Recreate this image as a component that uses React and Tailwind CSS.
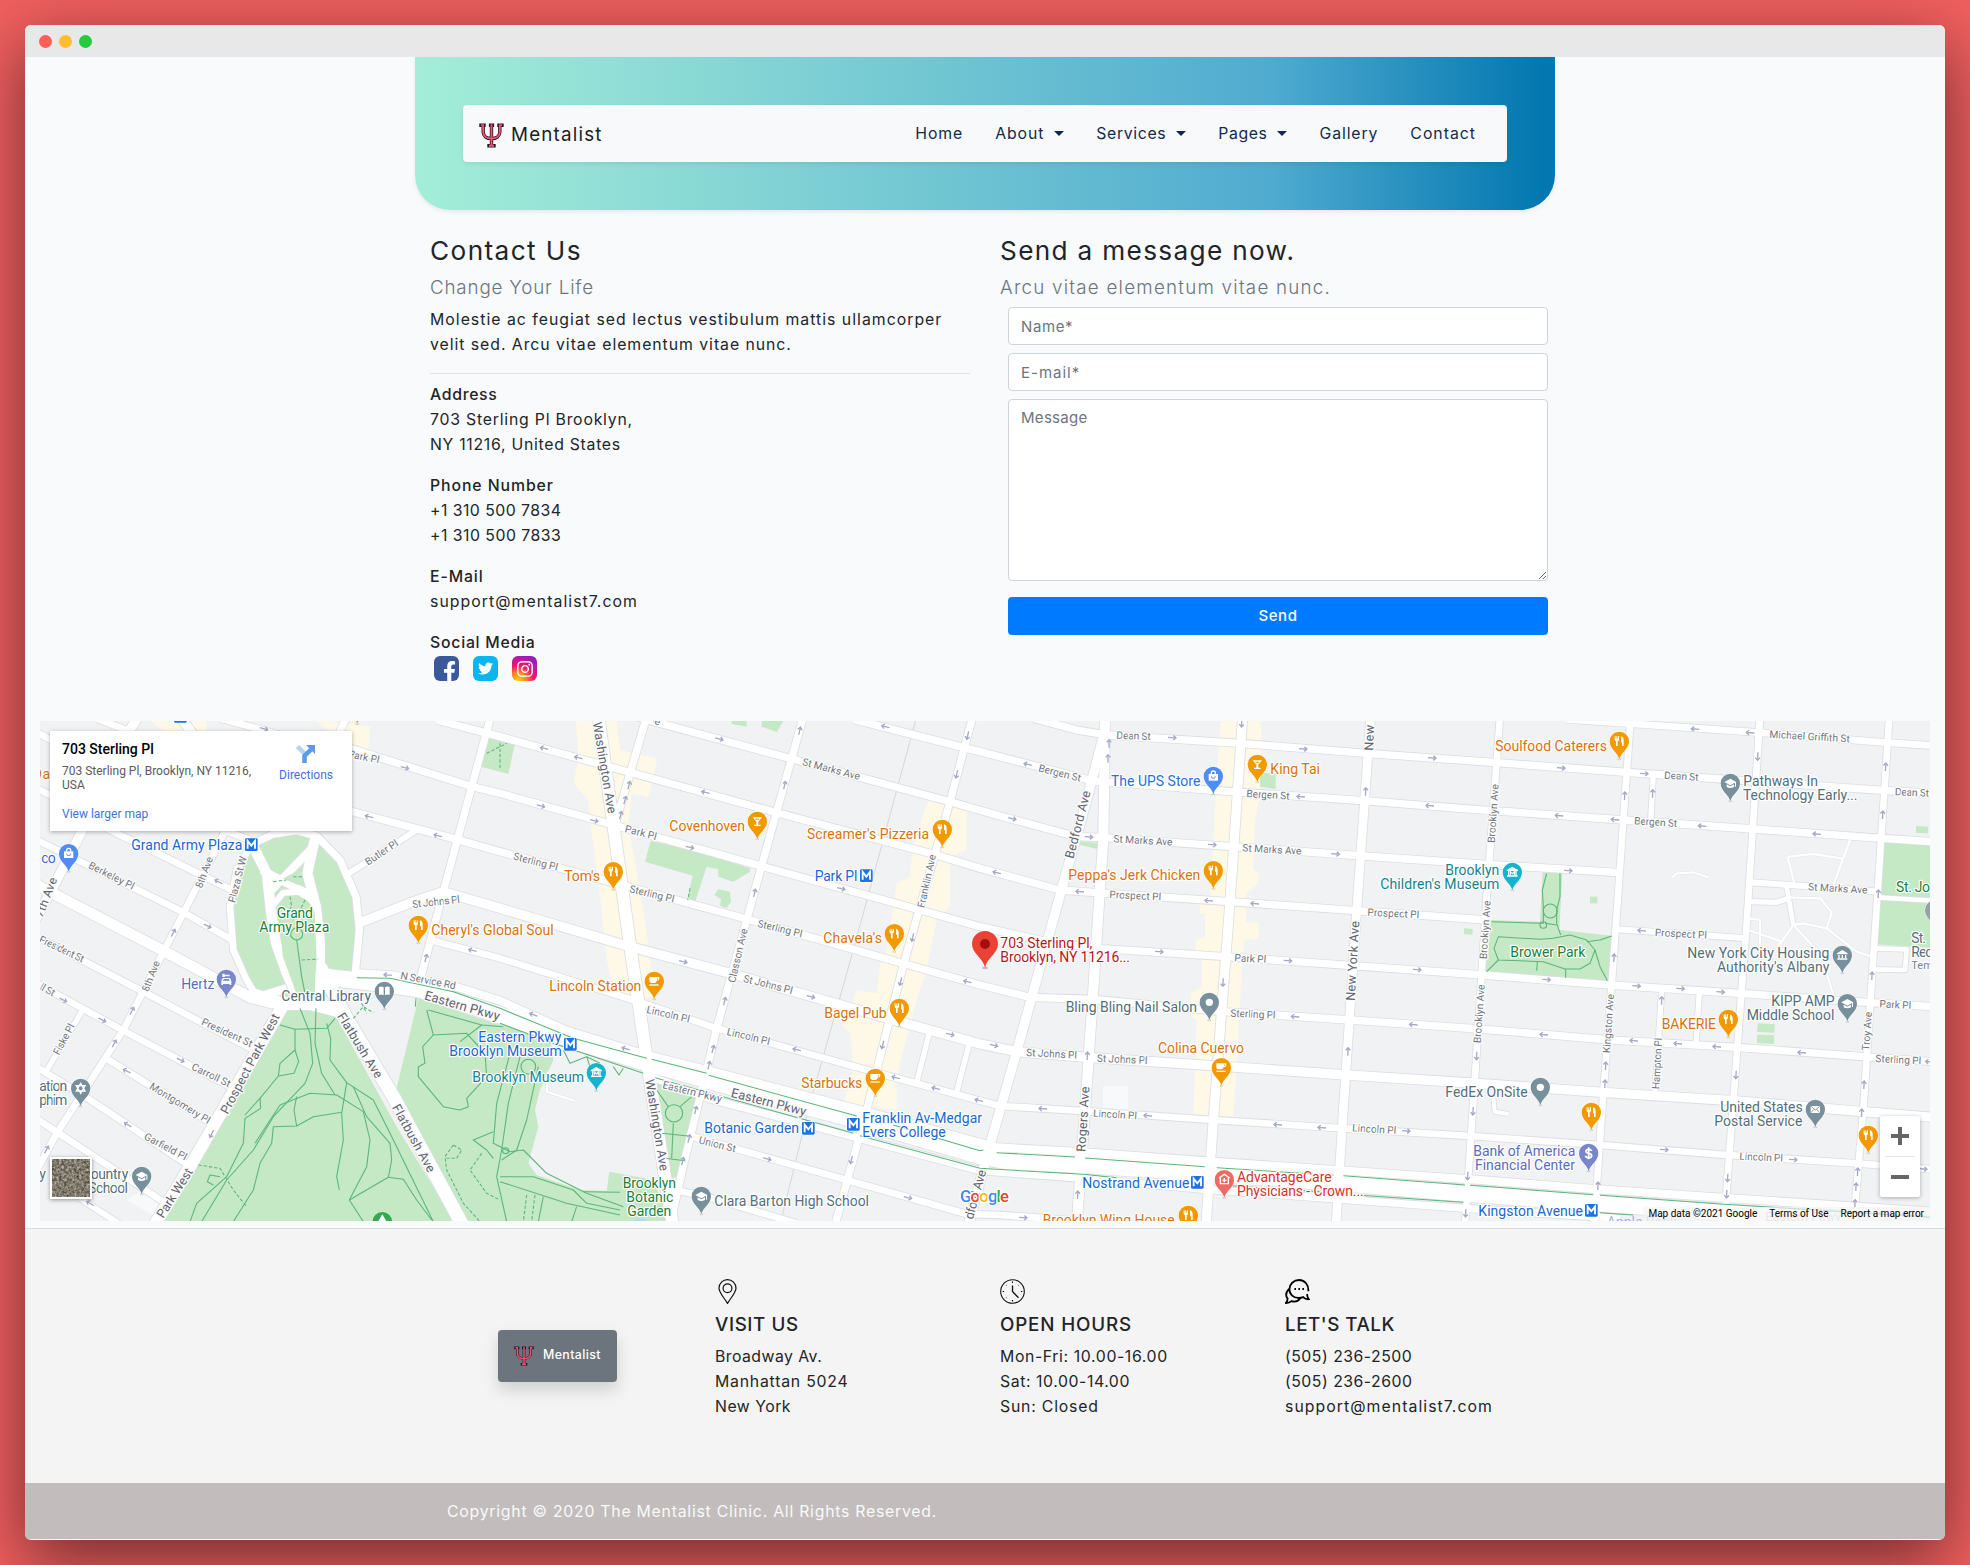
import React from "react";
import { FaFacebookF, FaTwitter, FaInstagram } from "react-icons/fa";

/* ---------- Map data (units: one third of a pixel) ---------- */

const ROADS = [
  // east-west streets
  [22, "1850,20 1920,40 2320,148 2790,275 2940,318 3170,380 3250,383 3640,410 4030,438 4380,462 4800,488"],
  [18, "5190,517 5310,525 5580,545"],
  [22, "2500,28 2840,115 2880,125 3220,213 3580,241 4030,272 4320,295 4810,330 5200,357 5585,385 5740,395"],
  [22, "3040,25 3170,60 3260,75 3660,100 4040,130 4430,158 4820,187 5600,242 5740,250"],
  [20, "4640,28 4820,40 5220,68 5600,98 5740,107"],
  [22, "1250,30 1440,80 1840,190 2270,308 2750,435 2880,475 3120,540 3230,548 3630,575 4010,602 4400,630"],
  [18, "4790,658 5180,685"],
  [22, "990,115 1350,228 1440,250 1780,345 2230,470 2700,600 2880,650 3080,695 3230,715 3620,740 4000,767 4390,795 4770,825 5160,850 5550,878 5740,890"],
  [22, "990,303 1310,388 1440,425 1785,520 2180,627 2655,762 2880,825 3030,862 3220,868 3610,905 3990,930 4380,957 4770,990 5150,1012 5530,1040 5740,1055"],
  [28, "1010,642 1180,575 1270,545 1440,595 1830,710 2130,790 2620,930 2880,1002 2990,1025 3200,1042 3580,1067 3980,1095 4370,1120 4760,1148 5140,1172 5530,1205 5740,1222"],
  [20, "1230,690 1440,745 1840,870 2090,955 2560,1085 2880,1172 2940,1188 3190,1203 3580,1230 3970,1255 4350,1278 4740,1305 5120,1335 5510,1360 5740,1378"],
  [20, "2000,1275 2480,1410 2840,1512 2940,1515 3170,1532"],
  [20, "1940,1435 2060,1460 2330,1540"],
  // parkway
  [24, "1010,790 1110,795 1300,828 1440,872 1640,962 1880,1035 2060,1080 2540,1205 2930,1312 3180,1326 3580,1355 4380,1410 4720,1437 5120,1464 5740,1505"],
  [22, "1880,1095 2080,1170 2500,1280 2880,1382 3160,1403 3580,1440 4380,1498 4800,1525"],
  [50, "910,800 1080,820 1200,838 1440,915 1660,992 1880,1058 2090,1118 2540,1238 2880,1338 2960,1352 3180,1364 3580,1390 4000,1422 4340,1450 4720,1478 5120,1508 5500,1536"],
  // north-south avenues
  [36, "1735,20 1780,345 1830,705 1885,1080 1958,1545"],
  [22, "1880,20 1785,345"],
  [22, "2350,20 2270,305 2180,630 2090,955 2060,1080 1995,1345 1950,1545"],
  [22, "2858,20 2790,275 2650,765 2540,1200 2445,1545"],
  [28, "3250,80 3200,270 3130,520 2990,1025 2900,1340 2845,1545"],
  [30, "3255,20 3250,383 3218,868 3195,1203 3170,1545"],
  [28, "3668,20 3630,575 3580,1230 3558,1545"],
  [26, "4052,20 4010,602 3970,1200 3948,1545"],
  [20, "4440,20 4400,560 4365,1100 4335,1545"],
  [20, "4832,20 4775,825 4750,1150 4722,1545"],
  [20, "5220,20 5180,640 5140,1172 5112,1545"],
  [20, "5608,20 5560,740 5530,1200 5500,1545"],
  [16, "4900,190 4892,335"],
  [16, "4925,840 4905,1155"],
  [16, "5038,848 5028,1004"],
  [16, "2730,960 2690,1118"],
  [16, "2850,992 2810,1146"],
  [14, "5568,715 5660,718 5655,780 5565,778"],
  [16, "5190,575 5270,577 5305,565"],
  [14, "5300,530 5320,645"],
  [12, "4420,1160 4424,1205 4466,1212"],
  [14, "5570,562 5740,572"],
  // streets west of the plaza
  [20, "620,355 490,610 310,960 110,1270 40,1400"],
  [28, "190,355 90,550 40,640"],
  [28, "355,20 320,75"],
  [28, "480,20 520,75"],
  [20, "230,25 330,65"],
  [20, "600,25 780,75"],
  [20, "40,60 110,100"],
  [22, "980,20 955,75"],
  [16, "185,905 75,1090"],
  [32, "40,515 60,530 430,722 690,862 760,880"],
  [20, "40,230 110,265"],
  [20, "40,385 490,607 640,692"],
  [20, "250,350 640,542"],
  [20, "600,355 700,395"],
  [20, "40,675 360,840 705,1022"],
  [20, "40,815 310,962 650,1140"],
  [20, "250,1040 590,1250"],
  [20, "40,1065 180,1150 515,1372"],
  [20, "40,1220 430,1475"],
  [18, "180,1465 310,1550"],
  [22, "1412,20 1270,545 1200,810"],
  [18, "1190,360 975,497"],
  [20, "700,395 650,480 630,590 640,720 680,810 715,868"],
  [22, "700,400 760,372 830,362 890,378 960,450 1008,560 1018,660 1005,800"],
  [36, "790,885 660,1110 510,1370 400,1550"],
  [40, "900,770 980,925 1120,1160 1330,1550"],
  [40, "700,855 780,880 870,880 970,905"],
  [30, "695,400 740,490 752,600 768,700 800,790 840,880"],
  [30, "885,385 862,490 888,590 900,700 900,800 900,890"],
  [26, "720,860 800,835"],
  [26, "905,795 960,805 1020,808"],
  [24, "725,480 860,550 885,600"],
  [24, "880,410 750,545 755,600"],
  [18, "760,585 790,548 840,545 880,590"],
];

const SMALL_ROADS = [
  "5305,440 5380,432 5470,446",
  "5490,390 5440,525",
  "5302,440 5325,528",
  "5305,562 5400,565 5435,607 5420,655",
  "5320,645 5285,695 5185,660",
  "5320,645 5385,715",
  "5320,645 5350,640 5420,655 5510,725 5555,740",
  "5190,625 5220,630 5220,705",
  "5285,695 5270,712",
  "4957,502 4970,490 5020,487 5065,502",
  "5420,790 5440,855",
  "1585,1085 1580,1145 1665,1173",
];

const YELLOW = [
  "1668,33 1790,33 1800,120 1912,147 1885,262 1835,250 1825,345 1840,430 1870,600 1895,780 1910,862 1785,862 1760,750 1740,560 1715,370 1705,270 1660,220 1675,150",
  "2725,270 2840,305 2840,420 2790,440 2790,590 2750,630 2720,780 2690,870 2630,1100 2630,1200 2470,1180 2500,1080 2490,965 2468,950 2510,840 2570,850 2580,765 2600,720 2630,520 2670,500 2680,400",
  "3602,33 3723,33 3722,250 3705,330 3700,480 3715,485 3715,522 3680,550 3678,637 3716,637 3716,686 3672,690 3660,870 3655,1000 3640,1220 3520,1215 3530,930 3513,920 3513,850 3545,830 3545,740 3525,730 3528,690 3555,680 3555,612 3540,610 3540,580 3570,560 3580,400 3590,200",
  "390,33 560,33 560,63 430,63",
  "888,33 930,33 1050,50 1045,120 990,110",
];

const PARKS = [
  "740,378 890,372 960,450 1010,560 1018,680 1003,805 930,790 920,860 800,870 715,862 660,780 638,680 640,590 665,470 705,400",
  "790,895 900,900 945,915 1130,1250 1310,1545 420,1545 600,1240",
  "1195,865 1440,945 1590,985 1600,1050 1560,1140 1545,1200 1555,1250 1525,1360 1550,1395 1680,1440 1760,1442 1768,1385 1900,1410 1955,1545 1330,1545 1125,1155",
  "1905,1110 2032,1160 1980,1400 1950,1405",
  "1892,392 2050,430 2190,475 2190,485 2140,515 2095,500 2095,478 2060,470 2025,577 2002,570 2018,497 1875,455",
  "2095,538 2130,545 2133,575 2120,595 2100,587 2103,568 2083,555",
  "1405,80 1485,100 1465,192 1383,170",
  "4410,630 4560,635 4568,487 4627,490 4618,660 4780,678 4768,815 4395,790",
  "5590,397 5740,405 5740,565 5575,560",
  "5573,570 5740,580 5740,715 5568,703",
  "5213,940 5265,943 5263,968 5211,966",
  "5211,974 5263,975 5262,1002 5211,1000",
  "4332,655 4358,657 4357,674 4332,673",
  "4710,560 4732,560 4732,580 4710,580",
  "5688,348 5725,350 5724,370 5688,369",
  "3250,100 3245,205 3228,205",
  "3182,395 3235,398 3232,417 3180,405",
  "3720,190 3767,190 3767,237 3720,230",
  "2135,33 2180,33 2180,50 2135,42",
  "2225,33 2290,33 2270,66 2225,50",
];

const PATHS = [
  "1010,803 1110,805 1300,845 1440,895 1660,985 1880,1045",
  "1895,1048 2060,1090",
  "2066,1096 2510,1218",
  "2620,1245 2880,1322 2890,1320",
  "2930,1328 3165,1341",
  "3195,1344 3555,1370",
  "3590,1373 3940,1396",
  "3970,1397 4335,1425",
  "4350,1426 4720,1454",
  "4740,1456 5100,1482 5740,1522",
  "1440,940 1600,1000 1870,1090",
  "1905,1103 2500,1270",
  "2520,1277 2880,1375 3190,1393 3290,1403",
  "3600,1425 3900,1445",
  "4020,1456 4330,1477",
  "4740,1508 4840,1515",
  // Prospect Park
  "780,945 825,958 920,955 945,925",
  "840,895 870,970 878,1060 855,1120 760,1220 700,1320 620,1410 545,1535",
  "888,895 885,1000 905,1090 945,1155",
  "825,958 825,1020 780,1060 775,1098 720,1165 722,1195 675,1225 670,1300 620,1400 530,1480 510,1535",
  "825,1020 836,1055 822,1090 775,1098",
  "720,1165 675,1215",
  "920,940 932,985 930,1050 980,1118 1060,1170 1110,1270 1240,1535",
  "780,1185 870,1150 950,1155 1030,1205 1050,1290 1040,1370 988,1470",
  "780,1185 705,1300",
  "980,1118 965,1210 970,1290 950,1400 958,1440",
  "988,1470 1030,1535",
  "1000,1130 1040,1220 1110,1300 1115,1350 1105,1402 988,1470",
  "830,1160 822,1200 830,1248 760,1250 755,1300 720,1360 700,1440 640,1535",
  "965,1207 880,1220 830,1248",
  "1105,1402 1150,1408 1190,1470 1235,1530",
  "600,1400 570,1395 562,1415 580,1425",
  // Botanic garden
  "1220,900 1240,975 1340,970 1395,1030 1400,1100 1340,1165 1345,1190 1320,1200 1270,1190 1195,1100 1195,1070 1215,1060 1208,1010 1240,975",
  "1225,900 1385,945 1320,995",
  "1385,945 1450,950",
  "1470,1030 1430,1180 1420,1300 1470,1325 1510,1320 1580,1390 1700,1450 1810,1490",
  "1500,1040 1465,1180 1445,1320 1430,1400 1460,1535",
  "1555,1070 1520,1230 1490,1320 1445,1350",
  "1420,1265 1360,1290 1400,1320 1420,1345",
  "1440,1400 1540,1400 1660,1440 1700,1480 1800,1500",
  "1440,1415 1640,1480 1800,1515",
  "1570,1460 1555,1535",
  "1670,1490 1655,1535",
  "1690,1445 1800,1447",
  "1630,1020 1650,1060 1700,1040 1740,1060",
  "1700,1040 1710,1070",
  "1780,1070 1797,1095 1810,1075",
  // Wedge garden
  "1910,1140 1945,1190",
  "2015,1160 1980,1190",
  "1960,1240 1955,1345",
  "1925,1270 2005,1278",
  "1935,1345 1995,1352",
  // Brower Park
  "4415,635 4570,640 4570,590 4567,540 4580,490",
  "4620,490 4620,560 4610,600 4610,640 4622,675",
  "4435,680 4560,688 4600,685 4650,675 4700,690 4725,720 4710,760 4680,777 4635,777 4570,755 4435,750 4422,715 4435,680",
  "4435,750 4400,785",
  "4700,695 4740,690 4775,678",
  "4725,720 4740,770 4762,812",
  "4552,755 4550,782",
  "4637,777 4637,803",
  "4575,640 4610,645",
  "1188,865 1186,890",
  "830,690 845,800 855,850",
];

const DASHED = [
  "535,1365 600,1375 640,1440 680,1490",
  "1300,1305 1275,1340 1280,1380 1330,1480 1380,1535",
  "1300,1305 1325,1320 1310,1345 1280,1345",
  "1385,1330 1350,1380 1400,1450 1440,1470",
  "810,560 815,590 800,610",
  "855,570 840,600",
  "845,750 895,747",
  "760,515 800,510",
  "820,500 850,500",
  "1440,100 1440,180",
  "1400,130 1460,100",
  "2010,535 2003,570",
  "1000,925 1030,890 1060,908",
  "1025,880 1040,910",
  "1520,1455 1510,1535",
  "1545,1455 1535,1535",
];

const CIRCLES = [
  [1962, 1210, 26],
  [4591, 603, 21],
  [4570, 645, 10],
  [1457, 1322, 9],
  [830, 672, 18],
  [1525, 1070, 22],
];

// x, y, heading in degrees (0 = east)
const ARROWS = [
  [732, 56, 15], [1155, 173, 15], [1047, 320, 194], [1253, 377, 194], [595, 515, 206], [563, 648, 27],
  [460, 668, -62], [336, 902, -62], [283, 1000, -62], [130, 870, 27], [247, 930, 27], [482, 1050, 27],
  [320, 1083, 207], [323, 1244, 210], [575, 1272, 118], [80, 1318, -60], [210, 1480, 210], [1218, 744, -76],
  [1357, 721, 194], [1103, 795, 182], [1572, 115, 194], [1675, 143, 194], [2098, 87, 14], [1563, 288, 14],
  [1723, 332, 14], [1827, 225, -75], [1815, 270, -75], [1802, 315, -75], [2056, 247, 194], [2339, 62, -77],
  [2294, 225, -77], [2596, 50, 194], [2843, 77, 103], [2810, 193, 103], [2010, 412, 14], [2464, 536, 14],
  [2930, 488, 194], [2204, 548, -76], [2114, 873, -76], [2079, 1017, -76], [2067, 1065, -76], [1990, 755, 15],
  [2373, 860, 15], [2678, 683, 104], [2642, 815, 104], [2588, 1005, 104], [2842, 815, 194], [2791, 973, 14],
  [2922, 1006, 14], [2627, 1103, 194], [2747, 1135, 194], [2876, 1171, 194], [2330, 1019, 194], [1817, 1016, 196],
  [1540, 914, 200], [2027, 1200, -76], [2007, 1285, -76], [1988, 1353, -76], [2242, 1347, 14], [2664, 1463, 14],
  [2494, 1350, 104], [3023, 163, 194], [3457, 83, 4], [3850, 117, 4], [4237, 144, 4], [3267, 100, -90],
  [3264, 145, -90], [3842, 260, 184], [4229, 287, 184], [4037, 244, -87], [2977, 326, 14], [3207, 381, 4],
  [3577, 404, 4], [3947, 432, 4], [3179, 545, 184], [3566, 572, 184], [3704, 581, 184], [3418, 725, 4],
  [3804, 752, 4], [4192, 779, 4], [3609, 818, 93], [3825, 920, 184], [4180, 944, 184], [3984, 1024, -87],
  [3202, 1037, -88], [3068, 1196, 184], [3383, 1217, 184], [3773, 1244, 184], [3905, 1253, 184],
  [4159, 1263, 4], [4370, 1038, 93], [4359, 1204, 93], [4343, 1398, 93], [4337, 1510, 93], [3173, 1454, -88],
  [3010, 1523, 4], [3665, 40, 93], [4624, 174, 4], [4873, 191, 4], [5025, 57, 184], [5190, 68, 184],
  [5213, 140, 93], [4814, 257, -87], [4898, 250, -87], [5597, 170, -87], [5588, 314, -87], [4617, 317, 184],
  [4785, 329, 184], [5046, 348, 184], [5390, 372, 184], [4645, 482, 4], [5575, 551, -87], [4865, 662, 184],
  [4782, 743, -87], [4580, 809, 4], [4850, 828, 4], [4982, 836, 4], [5102, 846, 4], [4925, 871, -87],
  [5556, 797, -87], [4571, 974, 184], [4841, 992, 184], [4973, 1001, 184], [5090, 1010, 184], [5345, 1028, 184],
  [5728, 1055, 184], [4757, 1067, -87], [4755, 1121, -87], [5148, 1095, 93], [5532, 1124, -87], [5525, 1208, -87],
  [4933, 1319, 4], [5320, 1349, 4], [5123, 1404, 93], [5120, 1453, 93], [5513, 1385, -87], [5508, 1430, -87],
  [5505, 1480, -87], [4734, 1427, -87], [5710, 1377, 4],
];

// text, start x,y, end x,y (baseline), size
const STREETS = [
  ["Park Pl", 983, 142, 1076, 160, 31],
  ["Butler Pl", 1044, 467, 1137, 405, 31],
  ["Berkeley Pl", 203, 473, 337, 540, 31],
  ["8th Ave", 545, 536, 580, 445, 31],
  ["8th Ave", 385, 847, 420, 757, 31],
  ["Plaza St W", 645, 580, 680, 442, 31],
  ["7th Ave", 67, 625, 112, 508, 36],
  ["President St", 55, 695, 186, 758, 31],
  ["ll St", 58, 838, 98, 860, 31],
  ["Fiske Pl", 117, 1037, 165, 948, 31],
  ["President St", 542, 943, 692, 1012, 31],
  ["Carroll St", 512, 1078, 626, 1132, 31],
  ["Montgomery Pl", 386, 1135, 563, 1242, 31],
  ["Garfield Pl", 370, 1286, 494, 1352, 31],
  ["St Johns Pl", 1178, 594, 1320, 578, 31],
  ["N Service Rd", 1140, 806, 1305, 838, 31],
  ["Eastern Pkwy", 1211, 868, 1435, 932, 39],
  ["Prospect Park West", 623, 1215, 780, 920, 38],
  ["Flatbush Ave", 950, 918, 1068, 1108, 38],
  ["Flatbush Ave", 1115, 1192, 1225, 1390, 38],
  ["Park West", 430, 1527, 520, 1385, 38],
  ["Washington Ave", 1718, 38, 1764, 312, 38],
  ["Washington Ave", 1876, 1110, 1920, 1384, 38],
  ["ve", 1895, 40, 1918, 46, 31],
  ["St Marks Ave", 2345, 165, 2517, 210, 31],
  ["Park Pl", 1813, 366, 1907, 390, 31],
  ["Sterling Pl", 1478, 448, 1611, 482, 31],
  ["Sterling Pl", 1827, 546, 1960, 578, 31],
  ["Sterling Pl", 2211, 650, 2344, 682, 31],
  ["Classon Ave", 2145, 820, 2183, 658, 31],
  ["St Johns Pl", 2168, 815, 2315, 852, 31],
  ["Lincoln Pl", 1878, 908, 2007, 938, 31],
  ["Lincoln Pl", 2119, 974, 2247, 1005, 31],
  ["Franklin Ave", 2713, 595, 2748, 436, 31],
  ["Eastern Pkwy", 1926, 1134, 2103, 1178, 32],
  ["Eastern Pkwy", 2131, 1160, 2355, 1218, 39],
  ["Union St", 2035, 1300, 2145, 1327, 31],
  ["dford Ave", 2858, 1530, 2899, 1384, 38],
  ["Dean St", 3289, 86, 3392, 90, 31],
  ["Bergen St", 3054, 184, 3180, 215, 31],
  ["Bergen St", 3679, 261, 3808, 269, 31],
  ["Bedford Ave", 3160, 448, 3212, 246, 38],
  ["St Marks Ave", 3280, 397, 3457, 407, 31],
  ["St Marks Ave", 3667, 424, 3844, 434, 31],
  ["Prospect Pl", 3268, 564, 3423, 571, 31],
  ["Prospect Pl", 4042, 617, 4197, 625, 31],
  ["Park Pl", 3643, 754, 3738, 759, 31],
  ["Sterling Pl", 3631, 920, 3766, 926, 31],
  ["St Johns Pl", 3018, 1038, 3170, 1046, 31],
  ["St Johns Pl", 3230, 1055, 3382, 1062, 31],
  ["Lincoln Pl", 3219, 1220, 3350, 1228, 31],
  ["Lincoln Pl", 3996, 1264, 4128, 1272, 31],
  ["Rogers Ave", 3196, 1326, 3208, 1130, 38],
  ["New York Ave", 4004, 873, 4018, 634, 38],
  ["New", 4060, 122, 4062, 45, 38],
  ["Brooklyn Ave", 4424, 399, 4436, 223, 31],
  ["Brooklyn Ave", 4400, 748, 4412, 572, 31],
  ["Brooklyn Ave", 4382, 1000, 4394, 824, 31],
  ["Kingston Ave", 4770, 1030, 4782, 853, 31],
  ["Hampton Pl", 4918, 1138, 4926, 984, 31],
  ["Troy Ave", 5547, 1022, 5556, 906, 31],
  ["Michael Griffith St", 5248, 83, 5489, 97, 31],
  ["Dean St", 4932, 206, 5035, 212, 31],
  ["Dean St", 5624, 256, 5727, 260, 31],
  ["Bergen St", 4842, 343, 4971, 351, 31],
  ["St Marks Ave", 5364, 541, 5542, 551, 31],
  ["Prospect Pl", 4904, 678, 5060, 686, 31],
  ["Park Pl", 5578, 892, 5673, 897, 31],
  ["Sterling Pl", 5566, 1056, 5703, 1063, 31],
  ["Lincoln Pl", 5158, 1349, 5288, 1355, 31],
];

const C = {
  orange: "#d8730a",
  blue: "#1967d2",
  shop: "#2b6fd6",
  green: "#188038",
  teal: "#128391",
  slate: "#546e7a",
  purple: "#5c6bc0",
  red: "#b3171b",
  coral: "#d93025",
};

// text, start x, end x, baseline, colour
const PLACES = [
  ["Da", 38, 90, 207, C.orange],
  ["co", 64, 107, 459, C.shop],
  ["Grand Army Plaza", 334, 667, 420, C.blue],
  ["Grand", 770, 879, 624, C.green],
  ["Army Plaza", 718, 928, 667, C.green],
  ["Cheryl's Global Soul", 1234, 1601, 675, C.orange],
  ["Hertz", 484, 583, 837, C.purple],
  ["Central Library", 784, 1053, 874, C.slate],
  ["Eastern Pkwy", 1375, 1624, 996, C.blue],
  ["Brooklyn Museum", 1288, 1625, 1038, C.blue],
  ["Brooklyn Museum", 1357, 1692, 1116, C.teal],
  ["ation", 58, 142, 1143, C.slate],
  ["phim", 58, 142, 1185, C.slate],
  ["ountry", 212, 325, 1407, C.slate],
  ["School", 205, 324, 1449, C.slate],
  ["y", 58, 74, 1407, C.slate],
  ["Covenhoven", 1948, 2175, 363, C.orange],
  ["Screamer's Pizzeria", 2361, 2727, 387, C.orange],
  ["Tom's", 1633, 1740, 513, C.orange],
  ["Park Pl", 2384, 2512, 513, C.blue],
  ["Chavela's", 2410, 2586, 699, C.orange],
  ["Lincoln Station", 1588, 1864, 843, C.orange],
  ["Bagel Pub", 2413, 2600, 924, C.orange],
  ["Starbucks", 2344, 2527, 1134, C.orange],
  ["Botanic Garden", 2053, 2337, 1269, C.blue],
  ["Franklin Av-Medgar", 2527, 2886, 1239, C.blue],
  ["Evers College", 2527, 2777, 1281, C.blue],
  ["Brooklyn", 1808, 1968, 1434, C.green],
  ["Botanic", 1819, 1960, 1476, C.green],
  ["Garden", 1822, 1954, 1518, C.green],
  ["Clara Barton High School", 2083, 2547, 1488, C.slate],
  ["703 Sterling Pl,", 2941, 3217, 714, C.red],
  ["Brooklyn, NY 11216...", 2941, 3330, 756, C.red],
  ["The UPS Store", 3273, 3541, 228, C.shop],
  ["King Tai", 3751, 3900, 192, C.orange],
  ["Peppa's Jerk Chicken", 3145, 3541, 510, C.orange],
  ["Bling Bling Nail Salon", 3137, 3531, 906, C.slate],
  ["Colina Cuervo", 3414, 3672, 1029, C.orange],
  ["Nostrand Avenue", 3187, 3508, 1434, C.blue],
  ["AdvantageCare", 3651, 3935, 1416, C.coral],
  ["Physicians - Crown...", 3651, 4031, 1458, C.coral],
  ["Brooklyn Wing House", 3068, 3464, 1544, C.orange],
  ["Brooklyn", 4276, 4438, 495, C.teal],
  ["Children's Museum", 4081, 4438, 537, C.teal],
  ["Soulfood Caterers", 4426, 4761, 123, C.orange],
  ["Pathways In", 5170, 5394, 228, C.slate],
  ["Technology Early...", 5169, 5512, 270, C.slate],
  ["Brower Park", 4471, 4696, 741, C.green],
  ["St. Jo", 5628, 5730, 546, C.green],
  ["St.", 5674, 5718, 699, C.slate],
  ["Rec", 5674, 5738, 741, C.slate],
  ["New York City Housing", 5002, 5428, 744, C.slate],
  ["Authority's Albany", 5091, 5428, 786, C.slate],
  ["KIPP AMP", 5254, 5444, 888, C.slate],
  ["Middle School", 5180, 5443, 930, C.slate],
  ["BAKERIE", 4925, 5088, 957, C.orange],
  ["FedEx OnSite", 4276, 4523, 1161, C.slate],
  ["United States", 5101, 5348, 1206, C.slate],
  ["Postal Service", 5083, 5347, 1248, C.slate],
  ["Bank of America", 4360, 4666, 1338, C.purple],
  ["Financial Center", 4365, 4665, 1380, C.purple],
  ["Kingston Avenue", 4375, 4689, 1518, C.blue],
];

const METRO = [
  [694, 404], [1651, 1003], [2539, 497], [2365, 1255], [2500, 1243], [3532, 1417], [4714, 1501], [481, 19],
];

const PIN = { food: "#f29900", shop: "#4f8df5", slate: "#78909c", teal: "#12b5cb", purple: "#7986cb", coral: "#ef6a62" };

const PINS = [
  [1012, -12, PIN.food, "none"],
  [146, 431, PIN.shop, "bag"], [1195, 646, PIN.food, "fork"], [619, 808, PIN.purple, "car"],
  [1093, 844, PIN.slate, "book"], [182, 1135, PIN.slate, "star"], [365, 1399, PIN.slate, "school"],
  [2212, 334, PIN.food, "glass"], [2767, 358, PIN.food, "fork"], [1780, 485, PIN.food, "fork"],
  [2623, 671, PIN.food, "fork"], [1903, 814, PIN.food, "cup"], [2638, 895, PIN.food, "fork"],
  [2566, 1105, PIN.food, "cup"], [1729, 1088, PIN.teal, "museum"], [2044, 1459, PIN.slate, "school"],
  [3712, 163, PIN.food, "glass"], [3580, 199, PIN.shop, "bag"], [3580, 482, PIN.food, "fork"],
  [3568, 877, PIN.slate, "dot"], [3604, 1073, PIN.food, "cup"], [3613, 1409, PIN.coral, "med"],
  [3505, 1516, PIN.food, "fork"], [4798, 94, PIN.food, "fork"], [5131, 220, PIN.slate, "school"],
  [4477, 487, PIN.teal, "museum"], [5467, 736, PIN.slate, "bank"], [5482, 881, PIN.slate, "school"],
  [5125, 928, PIN.food, "fork"], [4561, 1132, PIN.slate, "dot"], [4714, 1207, PIN.food, "fork"],
  [5386, 1198, PIN.slate, "mail"], [4706, 1330, PIN.purple, "dollar"], [5545, 1276, PIN.food, "fork"],
  [5744, 600, "#9aa0a6", "none"],
];

function Glyph({ kind }) {
  switch (kind) {
    case "fork":
      return (
        <g fill="#fff">
          <path d="M-14,-15h3v7h2v-7h3v7h2v-7h3v10q0,4 -4,5v14h-5v-14q-4,-1 -4,-5z" />
          <path d="M5,-15q8,2 8,12v17h-5v-11h-3z" />
        </g>
      );
    case "cup":
      return (
        <g fill="#fff">
          <path fillRule="evenodd" d="M-15,-13h30v4q0,7 -8,7q-1,7 -7,7h-7q-8,0 -8,-8zM8,-9v4q4,0 4,-4z" />
          <rect x="-15" y="9" width="28" height="4" />
        </g>
      );
    case "glass":
      return <path fill="#fff" fillRule="evenodd" d="M-14,-12h28l-11,13v9h7v4h-20v-4h7v-9zM-7,-8l2,3h10l2,-3z" />;
    case "bag":
      return (
        <g>
          <path fill="#fff" d="M-14,-7h28v20h-28z" />
          <path fill="none" stroke="#fff" strokeWidth="4" d="M-6,-6v-4a6,6 0 0 1 12,0v4" />
          <path fill="none" stroke="#4f8df5" strokeWidth="3" d="M-6,0a6,6 0 0 0 12,0" />
        </g>
      );
    case "school":
      return (
        <g fill="#fff">
          <path d="M0,-14L18,-4L0,6L-18,-4z" />
          <path d="M-11,3L0,9L11,3v8q-11,6 -22,0z" />
          <path d="M14,-4h3v14h-3z" />
        </g>
      );
    case "museum":
      return (
        <g fill="#fff">
          <path d="M-17,-7L0,-17L17,-7v3h-34z" />
          <path d="M-13,-4h4v13h-4zM9,-4h4v13h-4zM-16,9h32v4h-32z" />
          <path d="M-6,8v-10l6,6l6,-6v10" fill="none" stroke="#fff" strokeWidth="3.5" />
        </g>
      );
    case "bank":
      return (
        <g fill="#fff">
          <path d="M-16,-6L0,-16L16,-6v3h-32z" />
          <path d="M-12,-1h4v9h-4zM-2,-1h4v9h-4zM8,-1h4v9h-4zM-15,9h30v4h-30z" />
        </g>
      );
    case "mail":
      return (
        <g>
          <rect x="-14" y="-10" width="28" height="21" fill="#fff" />
          <path d="M-13,-9L0,2L13,-9M-13,10L-4,0M13,10L4,0" fill="none" stroke="#78909c" strokeWidth="2.5" />
        </g>
      );
    case "book":
      return <path fill="#fff" d="M-16,-13q8,-3 14,1v24q-6,-4 -14,-1zM16,-13q-8,-3 -14,1v24q6,-4 14,-1z" />;
    case "star":
      return (
        <g fill="none" stroke="#fff" strokeWidth="4">
          <path d="M0,-15L13,8h-26zM0,15L13,-8h-26z" />
        </g>
      );
    case "car":
      return (
        <g fill="#fff">
          <path d="M-12,-17h7v3h15v5h-15v2h-7z" />
          <path fillRule="evenodd" d="M-11,-4h22l4,9v12h-5v-3h-20v3h-5v-12zM-8,-1l-2,5h20l-2,-5z" />
        </g>
      );
    case "med":
      return (
        <g fill="none" stroke="#fff" strokeWidth="4">
          <path d="M-16,-5L0,-16L16,-5M-12,-6v18h24v-18M0,-5v13M-6,2h12" />
        </g>
      );
    case "dollar":
      return (
        <g fill="none" stroke="#fff" strokeWidth="5">
          <path d="M9,-7q-2,-5 -9,-5q-8,0 -8,6q0,5 8,6q9,1 9,7q0,6 -9,6q-8,0 -10,-6M0,-18v36" />
        </g>
      );
    case "dot":
      return <circle r="11" fill="#fff" />;
    default:
      return null;
  }
}

function StreetLabel({ item }) {
  const [text, x1, y1, x2, y2, size] = item;
  const len = Math.hypot(x2 - x1, y2 - y1);
  const angle = (Math.atan2(y2 - y1, x2 - x1) * 180) / Math.PI;
  return (
    <text
      transform={`translate(${x1},${y1}) rotate(${angle})`}
      fontSize={size}
      textLength={len}
      fill={size > 34 ? "#5f646b" : "#70757c"}
      stroke="#fbfbfc"
      strokeWidth="8"
      strokeLinejoin="round"
      paintOrder="stroke"
    >
      {text}
    </text>
  );
}

function StreetMap() {
  return (
    <svg viewBox="60 33 5670 1500" className="block h-[500px] w-[1890px] font-[Roboto,sans-serif]" preserveAspectRatio="none">
      <rect x="60" y="33" width="5670" height="1500" fill="#f1f2f4" />
      {YELLOW.map((p, i) => <polygon key={i} points={p} fill="#fef8e7" />)}
      <path d="M3249,1128h75v78h-75z" fill="#f8f9fa" />
      <path d="M380,1430l80,45l-30,60l-110,-65z" fill="#f8f9fa" />
      {PARKS.map((p, i) => <polygon key={i} points={p} fill="#c5e8c5" />)}
      <path d="M1835,1535q20,-14 45,-6v6z" fill="#aadaff" />
      <path d="M2690,20L2500,720L2370,1180L2280,1545" fill="none" stroke="#d4d6da" strokeWidth="3" />
      <g fill="none" strokeLinejoin="round">
        {SMALL_ROADS.map((p, i) => <polyline key={"sc" + i} points={p} stroke="#e3e5e9" strokeWidth="10" />)}
        {ROADS.map(([w, p], i) => <polyline key={"c" + i} points={p} stroke="#dcdee3" strokeWidth={w + 5} />)}
        {SMALL_ROADS.map((p, i) => <polyline key={"sf" + i} points={p} stroke="#fff" strokeWidth="7" />)}
        {ROADS.map(([w, p], i) => <polyline key={"f" + i} points={p} stroke="#fff" strokeWidth={w} />)}
      </g>
      <path d="M778,620q0,-62 48,-62q45,5 58,50l6,140l-8,110h-50l-44,-120z" fill="#c5e8c5" />
      <path d="M790,505l35,-18l28,24l-20,14z" fill="#c5e8c5" />
      <g fill="none" stroke="#5ab679" strokeWidth="3.2" strokeLinejoin="round">
        {PATHS.map((p, i) => <polyline key={i} points={p} />)}
        {CIRCLES.map(([x, y, r], i) => <circle key={i} cx={x} cy={y} r={r} />)}
        <g strokeDasharray="10 6">
          {DASHED.map((p, i) => <polyline key={i} points={p} />)}
        </g>
      </g>
      <g fill="none" stroke="#a4a9c6" strokeWidth="4">
        {ARROWS.map(([x, y, a], i) => (
          <path key={i} transform={`translate(${x},${y}) rotate(${a})`} d="M-13,0H11M3,-7L11,0L3,7" />
        ))}
      </g>
      <g>
        {STREETS.map((s, i) => <StreetLabel key={i} item={s} />)}
      </g>
      <g>
        {METRO.map(([x, y], i) => (
          <g key={i} transform={`translate(${x},${y})`}>
            <rect x="-21" y="-21" width="42" height="42" rx="5" fill="#fff" />
            <rect x="-19" y="-19" width="38" height="38" rx="4" fill="#1a73e8" />
            <path d="M-11,12V-11L0,3L11,-11V12" fill="none" stroke="#fff" strokeWidth="5.5" />
          </g>
        ))}
      </g>
      <path d="M1058,1535a29,29 0 0 1 58,0z" fill="#34a853" />
      <path d="M1087,1513l13,22h-26z" fill="#fff" />
      {PINS.map(([x, y, fill, kind], i) => (
        <g key={i} transform={`translate(${x},${y})`}>
          <ellipse cx="0" cy="54" rx="6" ry="3" fill="#000" opacity="0.15" />
          <path d="M0,54C-4,34 -29,24 -29,0A29,29 0 1 1 29,0C29,24 4,34 0,54Z" fill={fill} stroke="#fff" strokeWidth="2" paintOrder="stroke" />
          <Glyph kind={kind} />
        </g>
      ))}
      <g>
        <text x="4760" y="1552" fontSize="42" fill="#a9b2e0">Apple Bank</text>
        <text x="5236" y="1534" fontSize="38" fill="#c4c7cc">Eastern Pkwy</text>
        {PLACES.map(([t, x1, x2, y, fill], i) => (
          <text key={i} x={x1} y={y} textLength={x2 - x1} fontSize="42" fill={fill} stroke="#fff" strokeWidth="7" strokeLinejoin="round" paintOrder="stroke">
            {t}
          </text>
        ))}
        <text x="5674" y="776" fontSize="33" fill="#78828a" stroke="#fff" strokeWidth="7" paintOrder="stroke">Tem</text>
      </g>
      <g transform="translate(2895,702)">
        <ellipse cx="0" cy="72" rx="9" ry="4" fill="#000" opacity="0.2" />
        <path d="M0,72C-4,42 -39,30 -39,0A39,39 0 1 1 39,0C39,30 4,42 0,72Z" fill="#ea4335" />
        <circle r="15" fill="#a50e0e" />
      </g>
      <text x="2820" y="1475" fontSize="50" fontWeight="500" textLength="147" stroke="#fff" strokeWidth="8" paintOrder="stroke" strokeLinejoin="round">
        <tspan fill="#4285f4">G</tspan>
        <tspan fill="#ea4335">o</tspan>
        <tspan fill="#fbbc04">o</tspan>
        <tspan fill="#4285f4">g</tspan>
        <tspan fill="#34a853">l</tspan>
        <tspan fill="#ea4335">e</tspan>
      </text>
    </svg>
  );
}

/* ---------- Small drawings ---------- */

function Psi({ className }) {
  const d = "M2,2.3H5M4.2,2.3V9C4.2,13 7.5,15.6 12.5,15.6S20.8,13 20.8,9V2.3M20,2.3H23M12.5,2.3V22.8M11.6,2.3H13.4M10,22.8H15";
  return (
    <svg viewBox="0 0 25 25" className={className} fill="none">
      <path d={d} stroke="#231a2b" strokeWidth="3.4" strokeLinecap="square" />
      <path d={d} stroke="#f2506e" strokeWidth="1.9" />
    </svg>
  );
}

function PinIcon() {
  return (
    <svg viewBox="0 0 25 25" className="block h-[25px] w-[25px]" fill="none" stroke="#111" strokeWidth="1.2">
      <path d="M12.5,24.4C9,18.5 4,13.5 4,9.2A8.5,8.5 0 0 1 21,9.2C21,13.5 16,18.5 12.5,24.4Z" />
      <circle cx="12.5" cy="9.2" r="4.4" />
    </svg>
  );
}

function ClockIcon() {
  return (
    <svg viewBox="0 0 25 25" className="block h-[25px] w-[25px]" fill="none" stroke="#111" strokeWidth="1.1">
      <circle cx="12.5" cy="12.5" r="11.8" />
      <path d="M12.5,6.5V12.5L18.5,18.8" strokeWidth="1.3" />
      <path d="M12.5,2.6v1.5M12.5,20.9v1.5M2.6,12.5h1.5M20.9,12.5h1.5" />
      <path d="M6,6l.7,.7M18.3,6.7l.7,-.7M6,19l.7,-.7" stroke="#777" />
    </svg>
  );
}

function ChatIcon() {
  return (
    <svg viewBox="0 0 25 25" className="block h-[25px] w-[25px]" fill="none" stroke="#000" strokeWidth="1.8">
      <path d="M23.3,12.2C23.8,6 19.8,1 14.2,1C8.6,1 4.4,5.2 4.4,10.2C4.4,15.4 8.6,19 14,19C15.6,19 17,18.7 18.2,18.1C19.6,19.6 21.6,20.4 23.8,20.2C22.6,18.6 22,16.8 22.2,15" />
      <path d="M4.6,9.8C1,12.8 .4,16.6 2.6,19.6C2.6,21.6 2,23 .9,24C3.5,24 5.3,23.3 6.5,22.2C9.8,23.2 13.2,22.2 15.2,19.2" />
      <path d="M9.4,10h1.6M13.4,10h1.6M17.4,10h1.6" />
    </svg>
  );
}

function Caret() {
  return <span className="ml-[10px] block h-0 w-0 border-x-[5px] border-t-[5px] border-x-transparent border-t-[#12294d]" />;
}

/* ---------- Sections ---------- */

const NAV = [
  ["Home", "tracking-[0.93px]", false],
  ["About", "tracking-[0.89px]", true],
  ["Services", "tracking-[0.65px]", true],
  ["Pages", "tracking-[0.6px]", true],
  ["Gallery", "tracking-[0.9px]", false],
  ["Contact", "tracking-[1px]", false],
];

function Header() {
  return (
    <header className="mx-auto h-[153px] w-[1140px] rounded-b-[35px] bg-[linear-gradient(90deg,#a4eed8_0%,#6cc2d2_50%,#50abd0_75%,#0277b0_99%)] px-12 pt-12 shadow-[0_2px_4px_rgba(0,0,0,0.075)]">
      <nav className="flex h-[57px] items-center justify-between rounded bg-[#f8f9fa] pl-4 pr-[31px] shadow-[0_2px_4px_rgba(0,0,0,0.075)]">
        <a className="flex items-center gap-[7px] pt-1 text-[18.8px] text-[#1c1e21]">
          <Psi className="h-[25px] w-[25px]" />
          <span className="tracking-[1.18px]">Mentalist</span>
        </a>
        <div className="flex gap-8 text-[15.8px] text-[#12294d]">
          {NAV.map(([label, track, caret]) => (
            <a key={label} className="flex items-center">
              <span className={track}>{label}</span>
              {caret && <Caret />}
            </a>
          ))}
        </div>
      </nav>
    </header>
  );
}

function ContactInfo() {
  return (
    <div className="w-[540px] text-[15.8px] font-[370] leading-[25px] text-[#212529]">
      <h3 className="mb-1 text-[26.2px] leading-[34px] tracking-[1.4px]">Contact Us</h3>
      <p className="mb-1 pt-px text-[18.8px] font-light leading-[30px] tracking-[0.82px] text-[#6c757d]">Change Your Life</p>
      <p>
        <span className="tracking-[1.02px]">Molestie ac feugiat sed lectus vestibulum mattis ullamcorper</span>
        <br />
        <span className="tracking-[0.96px]">velit sed. Arcu vitae elementum vitae nunc.</span>
      </p>
      <hr className="mb-2 mt-4 border-black/10" />
      <address className="mb-4 not-italic">
        <span className="font-medium tracking-[0.68px]">Address</span>
        <br /><span className="tracking-[0.79px]">703 Sterling Pl Brooklyn,</span>
        <br /><span className="tracking-[0.72px]">NY 11216, United States</span>
      </address>
      <p className="mb-4">
        <span className="font-medium tracking-[0.92px]">Phone Number</span>
        <br /><span className="tracking-[0.47px]">+1 310 500 7834</span>
        <br /><span className="tracking-[0.49px]">+1 310 500 7833</span>
      </p>
      <p className="mb-4">
        <span className="font-medium tracking-[0.9px]">E-Mail</span>
        <br /><span className="tracking-[1.06px]">support@mentalist7.com</span>
      </p>
      <p className="font-medium tracking-[0.76px]">Social Media</p>
      <div className="mt-px flex gap-[14px] pl-1">
        <span className="flex h-[25px] w-[25px] items-end justify-end overflow-hidden rounded-[6px] bg-[#3a589b] pr-[3px]">
          <FaFacebookF className="-mb-px h-[21px] w-[13px] text-white" />
        </span>
        <span className="flex h-[25px] w-[25px] items-center justify-center rounded-[6px] bg-[#0bb5ee]">
          <FaTwitter className="h-[15px] w-[15px] text-white" />
        </span>
        <span className="flex h-[25px] w-[25px] items-center justify-center rounded-[6px] bg-[radial-gradient(circle_at_25%_100%,#ffd60a_0%,#ff8a1e_25%,#f0166f_50%,#b01bab_75%,#6a1fd0_100%)]">
          <FaInstagram className="h-[18px] w-[18px] text-white" />
        </span>
      </div>
    </div>
  );
}

function MessageForm() {
  const field = "block w-full rounded border border-[#ced4da] bg-white px-3 text-[15px] placeholder-[#6c757d] outline-none";
  return (
    <div className="w-[548px]">
      <h3 className="mb-1 text-[26.2px] font-[370] leading-[34px] tracking-[1.33px] text-[#212529]">Send a message now.</h3>
      <p className="mb-1 pt-px text-[18.8px] font-light leading-[30px] tracking-[1.23px] text-[#6c757d]">Arcu vitae elementum vitae nunc.</p>
      <form className="flex flex-col gap-2 pl-2">
        <input className={field + " h-[38px] pt-px tracking-[0.6px]"} placeholder="Name*" />
        <input className={field + " h-[38px] pt-px tracking-[1px]"} placeholder="E-mail*" />
        <textarea className={field + " mb-2 h-[182px] resize py-1.5 leading-6 tracking-[0.3px]"} placeholder="Message" />
        <button type="button" className="h-[38px] rounded bg-[#007bff] text-[15px] font-medium tracking-[0.6px] text-white">Send</button>
      </form>
    </div>
  );
}

function MapSection() {
  return (
    <section className="relative mx-[15px] h-[500px] overflow-hidden">
      <StreetMap />
      <div className="absolute left-[10px] top-[10px] flex h-[100px] w-[302px] justify-between bg-white pl-3 pr-[19px] font-[Roboto,sans-serif] shadow-[0_1px_4px_rgba(0,0,0,0.3)]">
        <div className="w-[200px]">
          <h4 className="mt-[10px] text-[14px] font-medium leading-4 text-black">703 Sterling Pl</h4>
          <p className="mt-[7px] text-[12px] leading-[14px] text-[#5b5b5b]">703 Sterling Pl, Brooklyn, NY 11216, USA</p>
          <a className="mt-[15px] block text-[12px] leading-[14px] text-[#4272db]">View larger map</a>
        </div>
        <div className="flex flex-col items-center pt-[12px] text-[12px] leading-[14px] text-[#4272db]">
          <svg viewBox="0 0 22 22" className="h-[22px] w-[22px]">
            <path d="M2.5,3.5L11,12" stroke="#b5d3f5" strokeWidth="4.5" />
            <path d="M9.5,20V13L16,6.5" fill="none" stroke="#5a9ae6" strokeWidth="4.5" />
            <path d="M11,2H20V11z" fill="#5a9ae6" />
          </svg>
          <span className="mt-[3px]">Directions</span>
        </div>
      </div>
      <div className="absolute bottom-[22px] left-[10px] h-[42px] w-[42px] border-2 border-white shadow-[0_1px_4px_rgba(0,0,0,0.4)]">
        <svg viewBox="0 0 38 38" className="block h-[38px] w-[38px]">
          <filter id="grain" x="0" y="0" width="100%" height="100%" colorInterpolationFilters="sRGB">
            <feTurbulence type="fractalNoise" baseFrequency="0.4" numOctaves="3" seed="4" />
            <feColorMatrix values="0.7 0 0 0 0.15  0.7 0 0 0 0.13  0.65 0 0 0 0.1  0 0 0 0 1" />
          </filter>
          <rect width="38" height="38" filter="url(#grain)" />
        </svg>
      </div>
      <div className="absolute bottom-6 right-[10px] flex h-[81px] w-10 flex-col items-center rounded-[2px] bg-white shadow-[0_1px_4px_rgba(0,0,0,0.3)]">
        <svg viewBox="0 0 18 18" className="my-[11px] block h-[18px] w-[18px]"><path d="M7,0h4v7h7v4h-7v7h-4v-7h-7v-4h7z" fill="#666" /></svg>
        <span className="h-px w-[30px] bg-[#e6e6e6]" />
        <span className="mt-[18px] h-1 w-[18px] bg-[#666]" />
      </div>
      <div className="absolute bottom-0 right-0 flex h-[14px] gap-3 bg-[#f5f5f5]/70 pl-[5px] pr-[6px] font-[Roboto,sans-serif] text-[10px] leading-[14px] text-black">
        <span>Map data ©2021 Google</span>
        <span>Terms of Use</span>
        <span>Report a map error</span>
      </div>
    </section>
  );
}

const COLUMNS = [
  {
    icon: PinIcon,
    title: ["VISIT US", "tracking-[0.6px]"],
    lines: [["Broadway Av.", "tracking-[0.46px]"], ["Manhattan 5024", "tracking-[0.78px]"], ["New York", "tracking-[0.5px]"]],
  },
  {
    icon: ClockIcon,
    title: ["OPEN HOURS", "tracking-[0.83px]"],
    lines: [["Mon-Fri: 10.00-16.00", "tracking-[0.62px]"], ["Sat: 10.00-14.00", "tracking-[0.58px]"], ["Sun: Closed", "tracking-[0.8px]"]],
  },
  {
    icon: ChatIcon,
    title: ["LET'S TALK", "tracking-[0.52px]"],
    lines: [["(505) 236-2500", "tracking-[0.5px]"], ["(505) 236-2600", "tracking-[0.5px]"], ["support@mentalist7.com", "tracking-[1.06px]"]],
  },
];

function Footer() {
  return (
    <footer>
      <div className="h-[255px] border-t border-[#dcdcdc] bg-[#f4f4f4]">
        <div className="mx-auto grid w-[1140px] grid-cols-4">
          <div className="flex justify-center pt-[101px]">
            <a className="flex h-[52px] w-[119px] items-center rounded bg-[#6c757d] pl-4 text-[12.4px] font-medium tracking-[0.38px] text-white shadow-[0_8px_16px_rgba(0,0,0,0.15)]">
              <Psi className="mr-[9px] h-5 w-5" />
              <span className="-mt-0.5">Mentalist</span>
            </a>
          </div>
          {COLUMNS.map(({ icon: Icon, title, lines }) => (
            <div key={title[0]} className="pl-[15px] pt-[50px] text-[15.8px] font-[370] leading-[25px] text-[#212529]">
              <Icon />
              <h5 className={"mb-1 mt-1.5 text-[18.8px] font-medium leading-[30px] " + title[1]}>{title[0]}</h5>
              {lines.map(([text, track]) => <p key={text} className={track}>{text}</p>)}
            </div>
          ))}
        </div>
      </div>
      <div className="h-14 bg-[#c2bdbc]">
        <p className="mx-auto w-[1140px] pl-8 text-[15.8px] leading-[57px] tracking-[0.76px] text-[#f8f9fa]">Copyright © 2020 The Mentalist Clinic. All Rights Reserved.</p>
      </div>
    </footer>
  );
}

export default function App() {
  return (
    <div className="h-[1565px] w-[1970px] overflow-hidden bg-[#f15f5f] px-[25px] pt-[25px] font-[Inter,sans-serif]">
      <div className="h-[1515px] overflow-hidden rounded-[6px] bg-[#f8fafc] shadow-[0_20px_68px_rgba(0,0,0,0.55)]">
        <div className="flex h-8 items-center gap-[7px] bg-[#e8e8e8] pl-[13.5px] pt-px">
          <span className="h-[13px] w-[13px] rounded-full bg-[#ff5f56]" />
          <span className="h-[13px] w-[13px] rounded-full bg-[#ffbd2e]" />
          <span className="h-[13px] w-[13px] rounded-full bg-[#27c93f]" />
        </div>
        <Header />
        <main className="mx-auto flex h-[511px] w-[1140px] gap-[30px] pl-[15px] pt-6">
          <ContactInfo />
          <MessageForm />
        </main>
        <MapSection />
        <div className="h-[7px]" />
        <Footer />
      </div>
    </div>
  );
}
